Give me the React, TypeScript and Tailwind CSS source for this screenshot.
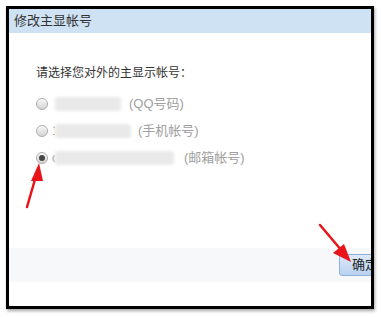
import React from 'react';

const font = { fontFamily: '"Liberation Sans", "Noto Sans CJK SC", sans-serif' };

type Row = { blurW: number; lead?: string; label: string; gap: number; checked?: boolean };

const rows: Row[] = [
  { blurW: 66, label: '(QQ号码)', gap: 8 },
  { blurW: 76, lead: '1', label: '(手机帐号)', gap: 7 },
  { blurW: 119, lead: 'c', label: '(邮箱帐号)', gap: 10, checked: true },
];

const Radio: React.FC<{ checked?: boolean }> = ({ checked }) => (
  <span className="flex h-[12px] w-[12px] shrink-0 items-center justify-center rounded-full border border-[#ababab] bg-gradient-to-b from-[#f6f6f6] to-[#d4d4d4] shadow-[inset_0_1px_1px_rgba(255,255,255,0.8)]">
    {checked && <span className="h-[6px] w-[6px] rounded-full bg-[#454545]" />}
  </span>
);

export default function App() {
  return (
    <div className="relative h-[317px] w-[381px] overflow-hidden bg-white" style={font}>
      {/* dialog */}
      <div className="ml-[6px] mt-[6px] flex h-[303px] w-[368px] flex-col overflow-hidden border-[3px] border-black bg-white shadow-[1px_2px_3px_rgba(0,0,0,0.35)]">
        <div className="flex h-[24px] shrink-0 items-center bg-[#cfe2f4] pl-[5px] text-[13px] text-[#333]">
          修改主显帐号
        </div>

        <div className="flex flex-1 flex-col pl-[27px] pt-[31px]">
          <div className="text-[12px] leading-[18px] text-[#333]">请选择您对外的主显示帐号：</div>
          <div className="mt-[16px] flex flex-col gap-[15px]">
            {rows.map((r, i) => (
              <div key={i} className="flex h-[12px] items-center text-[13px] text-[#a0a0a0]">
                <Radio checked={r.checked} />
                <span className="ml-[4px] flex items-center">
                  <span className="w-[3px] overflow-hidden text-[12px] text-[#999]">{r.lead ?? ''}</span>
                  <span
                    className="h-[14px] rounded-[3px] bg-[#e9e9e9] blur-[1.5px]"
                    style={{ width: r.blurW }}
                  />
                </span>
                <span className="leading-[14px]" style={{ marginLeft: r.gap }}>{r.label}</span>
              </div>
            ))}
          </div>
        </div>

        <div className="flex h-[34px] shrink-0 items-center justify-end bg-[#f6f8fa]">
          <button className="mr-[-22px] h-[22px] w-[54px] rounded-[3px] border border-[#8fb1dc] bg-gradient-to-b from-[#dce9f9] to-[#b9d2f1] pl-[12px] text-left text-[13px] text-[#222]">
            确定
          </button>
        </div>
        <div className="h-[24px] shrink-0" />
      </div>

      {/* annotation arrows */}
      <svg className="pointer-events-none absolute left-0 top-0" width="381" height="317">
        <line x1="27" y1="207" x2="36" y2="176" stroke="#e8141a" strokeWidth="2.5" strokeLinecap="round" />
        <polygon points="39,163 31,181 43,181" fill="#e8141a" />
        <line x1="320" y1="225" x2="342" y2="251" stroke="#e8141a" strokeWidth="2.5" strokeLinecap="round" />
        <polygon points="351,262 333,253 344,244" fill="#e8141a" />
      </svg>
    </div>
  );
}
